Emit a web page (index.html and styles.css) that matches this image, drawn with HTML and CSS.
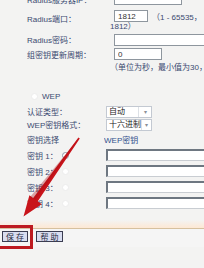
FILE: index.html
```html
<!DOCTYPE html>
<html>
<head>
<meta charset="utf-8">
<link rel="stylesheet" href="styles.css">
</head>
<body>
<div class="page">
  <div class="sec-top">
    <div class="row r0"><span class="lbl">Radius服务器IP：</span><span class="ctl"><input class="inp w68" value=""></span></div>
    <div class="row r1"><span class="lbl">Radius端口：</span><span class="ctl ctl-wrap"><span class="line"><input class="inp w34" value="1812"><span class="hint1">（1 - 65535，</span></span><span class="line2">1812）</span></span></div>
    <div class="row r2"><span class="lbl">Radius密码：</span><span class="ctl"><input class="inp wfull" value=""></span></div>
    <div class="row r3"><span class="lbl">组密钥更新周期：</span><span class="ctl"><input class="inp w48" value="0"></span></div>
    <div class="row r4"><span class="lbl"></span><span class="hint">（单位为秒，最小值为30，0表示不更新）</span></div>
  </div>
  <div class="sec-low">
    <div class="row wep"><span class="radio faint"></span><span class="wep-txt">WEP</span></div>
    <div class="row ra"><span class="lbl2">认证类型：</span><span class="ctl2"><span class="sel"><span class="sel-txt">自动</span><span class="sel-btn">▾</span></span></span></div>
    <div class="row rb"><span class="lbl2">WEP密钥格式：</span><span class="ctl2"><span class="sel"><span class="sel-txt">十六进制</span><span class="sel-btn">▾</span></span></span></div>
    <div class="row rc"><span class="lbl2">密钥选择</span><span class="ctl2 head">WEP密钥</span></div>
    <div class="row rk"><span class="lbl2 klbl"><span>密钥 1：</span><span class="radio ring"></span></span><span class="ctl2"><input class="kinp" value=""></span></div>
    <div class="row rk"><span class="lbl2 klbl"><span>密钥 2：</span><span class="radio faint"></span></span><span class="ctl2"><input class="kinp" value=""></span></div>
    <div class="row rk"><span class="lbl2 klbl"><span>密钥 3：</span><span class="radio faint"></span></span><span class="ctl2"><input class="kinp" value=""></span></div>
    <div class="row rk"><span class="lbl2 klbl"><span>密钥 4：</span><span class="radio faint"></span></span><span class="ctl2"><input class="kinp" value=""></span></div>
  </div>
  <div class="fade"></div>
  <div class="rule"></div>
  <div class="btnbar">
    <button class="btn">保存</button>
    <button class="btn">帮助</button>
  </div>
</div>
<div class="hl-box"></div>
<svg class="arrow" width="204" height="268" viewBox="0 0 204 268">
  <polygon points="78.4,137.4 79.8,138.4 37.8,201.3 41.6,204.2 23.5,216.5 29.4,195.3 33.2,198.1" fill="#c8141b"/>
  <polygon points="79.2,138 35.5,199.7 30.5,196.5" fill="#a80f15" opacity="0.35"/>
</svg>
</body>
</html>
```

FILE: styles.css
```css
html, body {
  margin: 0;
  padding: 0;
}
body {
  width: 204px;
  height: 268px;
  overflow: hidden;
  position: relative;
  background: #f3f3f2;
  font-family: "Liberation Sans", "Noto Sans CJK SC", sans-serif;
  font-size: 8px;
  color: #3a4970;
}
.page {
  margin-top: -8px;
  display: flex;
  flex-direction: column;
}
.row {
  display: flex;
  align-items: center;
  white-space: nowrap;
}
.sec-top .lbl {
  width: 83px;
  padding-left: 27px;
  flex: none;
}
.ctl {
  flex: 1;
  overflow: hidden;
  display: flex;
  align-items: center;
}
.inp {
  box-sizing: border-box;
  height: 12px;
  margin: 0 0 0 4px;
  padding: 0 3px;
  border: 1px solid #8e969e;
  background: #fff;
  font-family: "Liberation Sans", "Noto Sans CJK SC", sans-serif;
  font-size: 8px;
  color: #333;
  outline: none;
  flex: none;
}
.w68 { width: 68px; }
.w34 { width: 34px; }
.w48 { width: 48px; }
.wfull { width: 110px; }
.r0 { height: 14px; }
.r1 { height: 25px; align-items: center; }
.r1 .ctl-wrap {
  align-self: stretch;
  flex-direction: column;
  align-items: flex-start;
  padding-top: 4px;
  box-sizing: border-box;
}
.line {
  display: flex;
  align-items: center;
  height: 12px;
}
.hint1 {
  margin-left: 4px;
  color: #3a4970;
}
.line2 {
  height: 9px;
  line-height: 9px;
  margin-top: 0;
}
.r2 { height: 17px; }
.r3 { height: 12px; }
.r4 { height: 12px; }
.hint {
  overflow: hidden;
  flex: 1;
}
.sec-low {
  margin-top: 18px;
  display: flex;
  flex-direction: column;
}
.wep {
  height: 12px;
  padding-left: 31px;
}
.wep-txt {
  margin-left: 4px;
}
.radio {
  box-sizing: border-box;
  width: 7px;
  height: 7px;
  border-radius: 50%;
  background: #fff;
  flex: none;
}
.radio.faint { border: 1px solid #ececec; }
.radio.ring { border: 1px solid #8e98a6; }
.ra { height: 13px; margin-top: 3px; }
.rb { height: 13px; }
.rc { height: 16px; }
.rk { height: 16px; }
.lbl2 {
  width: 77px;
  padding-left: 27px;
  flex: none;
}
.klbl {
  display: flex;
  align-items: center;
  gap: 4px;
}
.ctl2 {
  flex: 1;
  overflow: hidden;
  display: flex;
  align-items: center;
}
.head {
  color: #2f4f8c;
}
.sel {
  margin-left: 2px;
  box-sizing: border-box;
  width: 46px;
  height: 12px;
  display: flex;
  align-items: stretch;
  background: #fff;
  border: 1px solid #c3c9d2;
  color: #222;
}
.sel-txt {
  flex: 1;
  padding-left: 2px;
  line-height: 10px;
}
.sel-btn {
  width: 12px;
  border-left: 1px solid #dde1e6;
  color: #8a8f98;
  font-size: 6px;
  line-height: 10px;
  text-align: center;
}
.kinp {
  box-sizing: border-box;
  margin: 0 0 0 2px;
  width: 110px;
  height: 12px;
  padding: 0 2px;
  background: #fff;
  border-style: solid;
  border-width: 2px 1px 1px 2px;
  border-color: #6e7781 #c9cdd2 #c9cdd2 #6e7781;
  outline: none;
  flex: none;
}
.fade {
  margin-top: 9px;
  height: 8px;
  background: linear-gradient(to bottom, rgba(253, 236, 220, 0), #fde8d4);
}
.rule {
  height: 1px;
  background: #d6c09e;
}
.btnbar {
  display: flex;
  gap: 8px;
  padding: 2px 0 0 2px;
  height: 16px;
  background: #f5f5f5;
}
.btn {
  box-sizing: border-box;
  width: 26px;
  height: 11px;
  padding: 0;
  margin: 0;
  border: 1px solid #3b3d52;
  background: #d9ddf0;
  font-family: "Noto Sans CJK SC", sans-serif;
  font-size: 8px;
  line-height: 9px;
  letter-spacing: 2px;
  text-indent: 2px;
  color: #2a2d44;
}
.btn + .btn {
  width: 27px;
}
.hl-box {
  position: absolute;
  left: -3px;
  top: 225px;
  width: 36px;
  height: 24px;
  box-sizing: border-box;
  border: 3px solid #bd1a20;
}
.arrow {
  position: absolute;
  left: 0;
  top: 0;
  pointer-events: none;
}
```
